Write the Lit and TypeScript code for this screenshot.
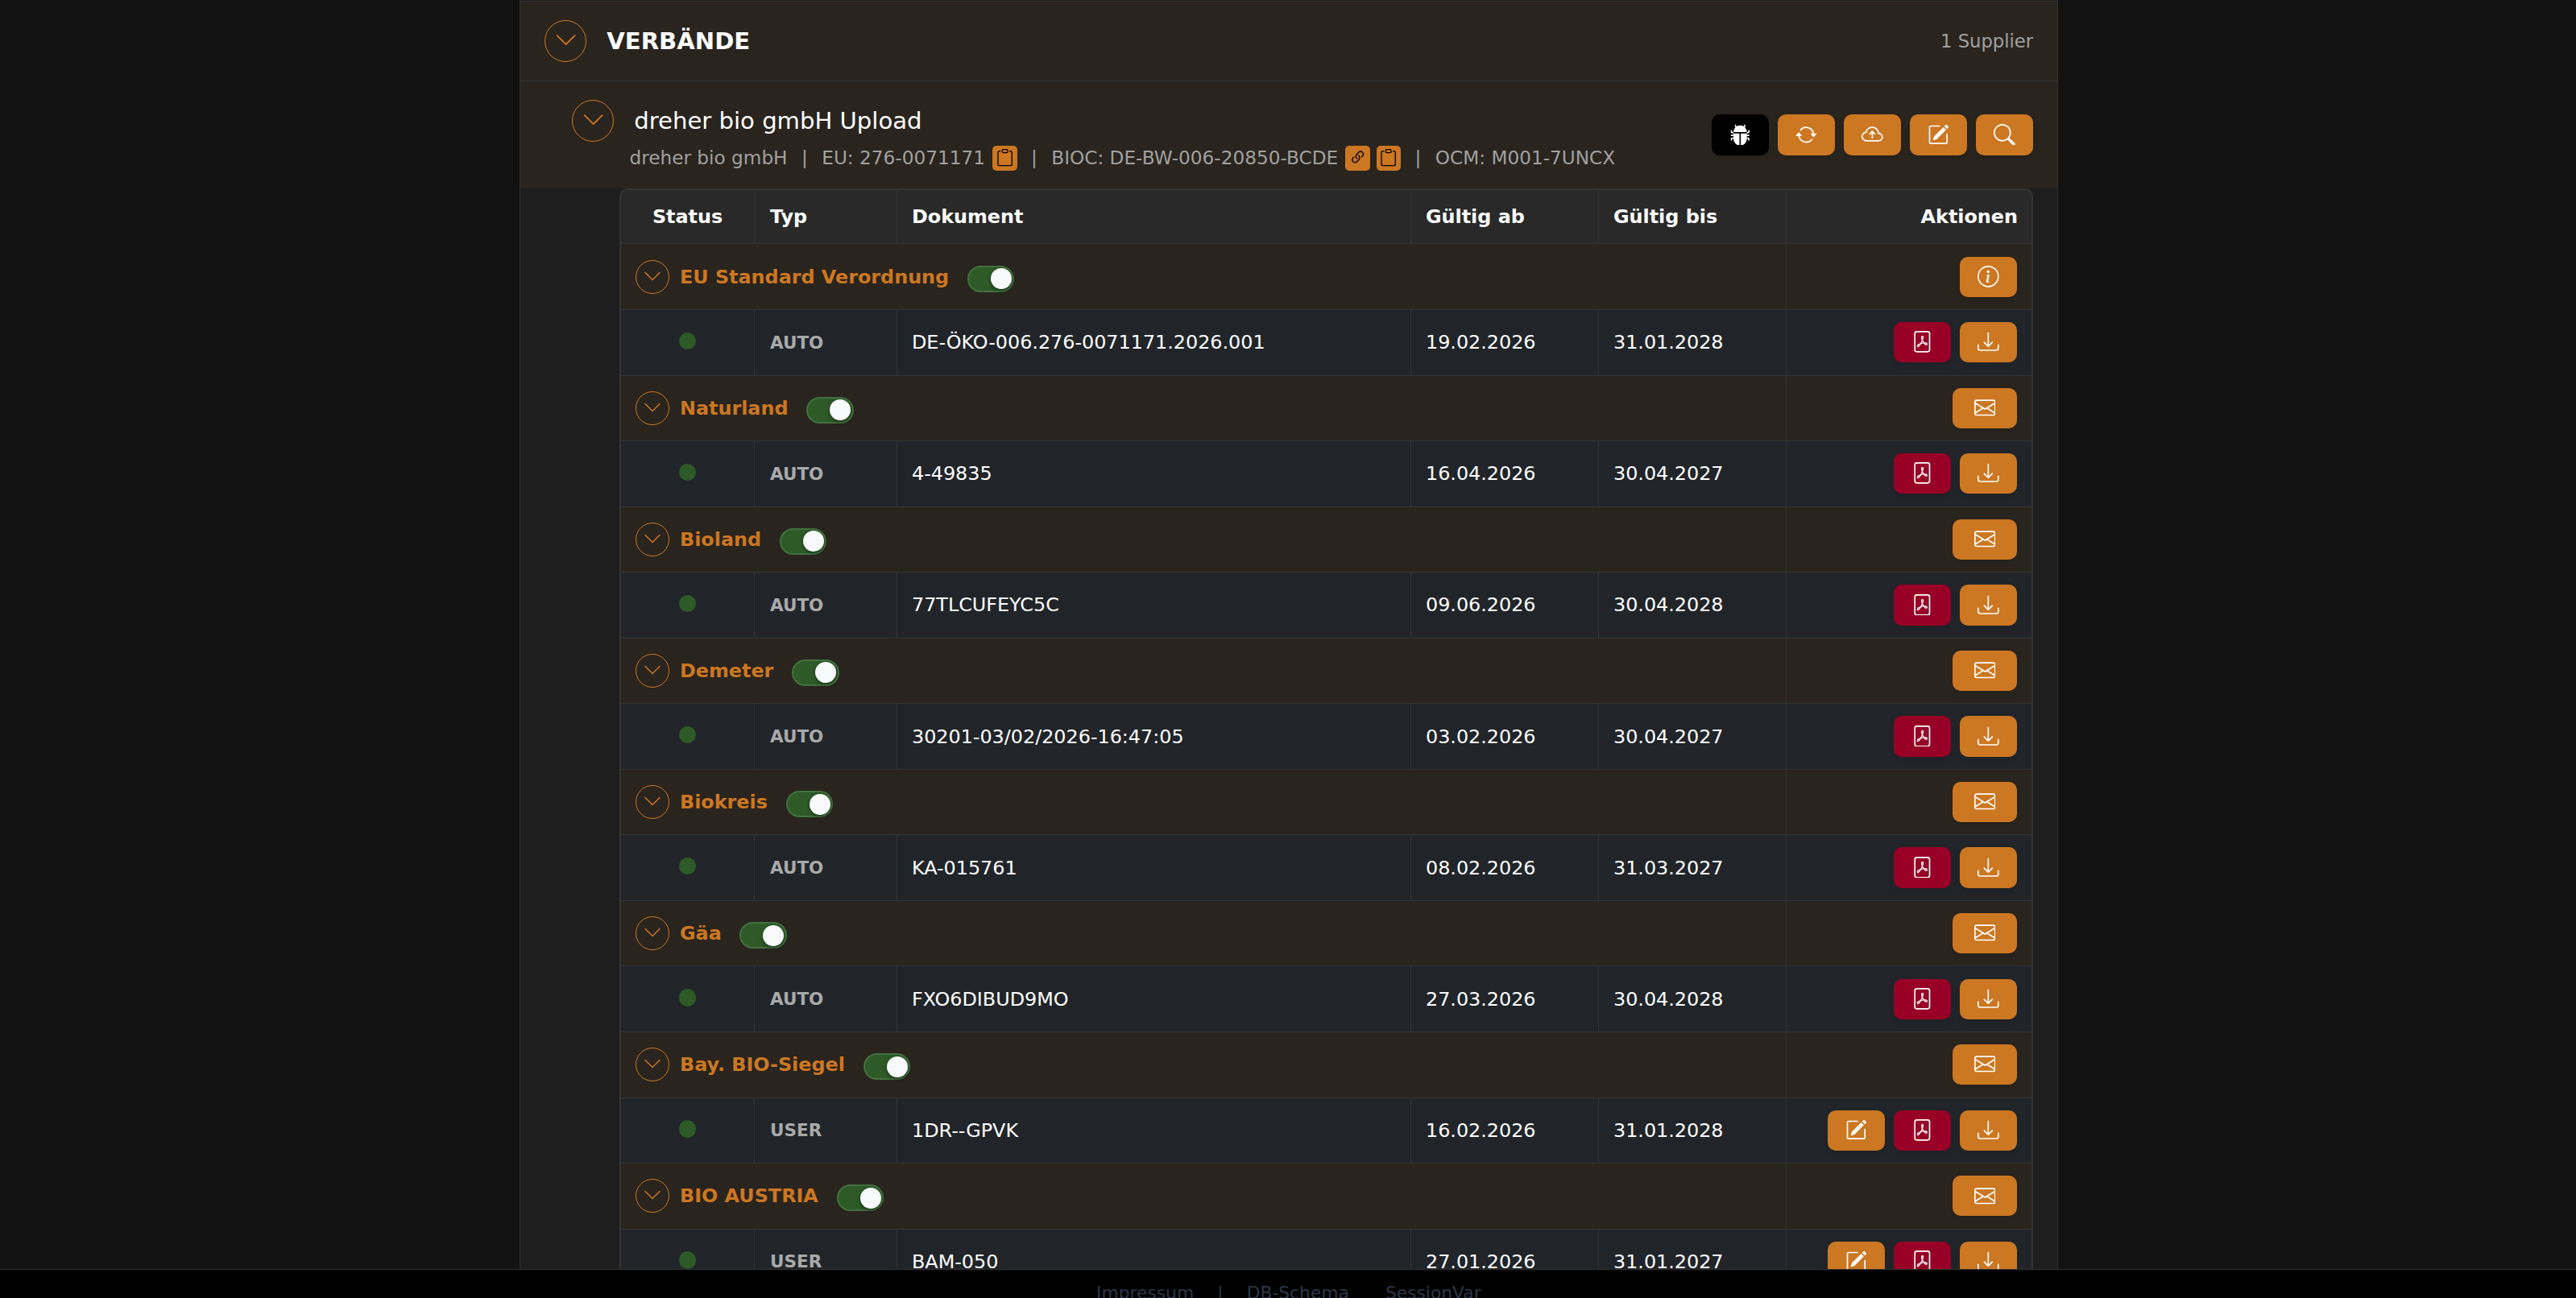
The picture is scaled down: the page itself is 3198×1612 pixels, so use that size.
import { LitElement, html, css, svg } from 'lit';
import type { SVGTemplateResult } from 'lit';
import { customElement, property } from 'lit/decorators.js';
import { classMap } from 'lit/directives/class-map.js';

const ICONS: Record<string, SVGTemplateResult> = {
  chevron: svg`<path fill-rule="evenodd" d="M1.646 4.646a.5.5 0 0 1 .708 0L8 10.293l5.646-5.647a.5.5 0 0 1 .708.708l-6 6a.5.5 0 0 1-.708 0l-6-6a.5.5 0 0 1 0-.708z"/>`,
  bug: svg`<path d="M4.978.855a.5.5 0 1 0-.956.29l.41 1.352A4.985 4.985 0 0 0 3 6h10a4.985 4.985 0 0 0-1.432-3.503l.41-1.352a.5.5 0 1 0-.956-.29l-.291.956A4.978 4.978 0 0 0 8 1a4.979 4.979 0 0 0-2.731.811l-.29-.956z"/><path d="M13 6v1H8.5v8.975A5 5 0 0 0 13 11h.5a.5.5 0 0 1 .5.5v.5a.5.5 0 1 0 1 0v-.5a1.5 1.5 0 0 0-1.5-1.5H13V9h1.5a.5.5 0 0 0 0-1H13V7h.5A1.5 1.5 0 0 0 15 5.5V5a.5.5 0 0 0-1 0v.5a.5.5 0 0 1-.5.5H13zm-5.5 9.975V7H3V6h-.5a.5.5 0 0 1-.5-.5V5a.5.5 0 0 0-1 0v.5A1.5 1.5 0 0 0 2.5 7H3v1H1.5a.5.5 0 0 0 0 1H3v1h-.5A1.5 1.5 0 0 0 1 11.5v.5a.5.5 0 1 0 1 0v-.5a.5.5 0 0 1 .5-.5H3a5 5 0 0 0 4.5 4.975z"/>`,
  repeat: svg`<path d="M11.534 7h3.932a.25.25 0 0 1 .192.41l-1.966 2.36a.25.25 0 0 1-.384 0l-1.966-2.36a.25.25 0 0 1 .192-.41zm-11 2h3.932a.25.25 0 0 0 .192-.41L2.692 6.23a.25.25 0 0 0-.384 0L.342 8.59A.25.25 0 0 0 .534 9z"/><path fill-rule="evenodd" d="M8 3c-1.552 0-2.94.707-3.857 1.818a.5.5 0 1 1-.771-.636A6.002 6.002 0 0 1 13.917 7H12.9A5.002 5.002 0 0 0 8 3zM3.1 9a5.002 5.002 0 0 0 8.757 2.182.5.5 0 1 1 .771.636A6.002 6.002 0 0 1 2.083 9H3.1z"/>`,
  cloud: svg`<path fill-rule="evenodd" d="M7.646 5.146a.5.5 0 0 1 .708 0l2 2a.5.5 0 0 1-.708.708L8.5 6.707V10.5a.5.5 0 0 1-1 0V6.707L6.354 7.854a.5.5 0 1 1-.708-.708l2-2z"/><path d="M4.406 3.342A5.53 5.53 0 0 1 8 2c2.69 0 4.923 2 5.166 4.579C14.758 6.804 16 8.137 16 9.773 16 11.569 14.502 13 12.687 13H3.781C1.708 13 0 11.366 0 9.318c0-1.763 1.266-3.223 2.942-3.593.143-.863.698-1.723 1.464-2.383zm.653.757c-.757.653-1.153 1.44-1.153 2.056v.448l-.445.049C2.064 6.805 1 7.952 1 9.318 1 10.785 2.23 12 3.781 12h8.906C13.98 12 15 10.988 15 9.773c0-1.216-1.02-2.228-2.313-2.228h-.5v-.5C12.188 4.825 10.328 3 8 3a4.53 4.53 0 0 0-2.941 1.1z"/>`,
  edit: svg`<path d="M15.502 1.94a.5.5 0 0 1 0 .706L14.459 3.69l-2-2L13.502.646a.5.5 0 0 1 .707 0l1.293 1.293zm-1.75 2.456-2-2L4.939 9.21a.5.5 0 0 0-.121.196l-.805 2.414a.25.25 0 0 0 .316.316l2.414-.805a.5.5 0 0 0 .196-.12l6.813-6.814z"/><path fill-rule="evenodd" d="M1 13.5A1.5 1.5 0 0 0 2.5 15h11a1.5 1.5 0 0 0 1.5-1.5v-6a.5.5 0 0 0-1 0v6a.5.5 0 0 1-.5.5h-11a.5.5 0 0 1-.5-.5v-11a.5.5 0 0 1 .5-.5H9a.5.5 0 0 0 0-1H2.5A1.5 1.5 0 0 0 1 2.5v11z"/>`,
  search: svg`<path d="M11.742 10.344a6.5 6.5 0 1 0-1.397 1.398h-.001c.03.04.062.078.098.115l3.85 3.85a1 1 0 0 0 1.415-1.414l-3.85-3.85a1.007 1.007 0 0 0-.115-.1zM12 6.5a5.5 5.5 0 1 1-11 0 5.5 5.5 0 0 1 11 0z"/>`,
  info: svg`<path d="M8 15A7 7 0 1 1 8 1a7 7 0 0 1 0 14zm0 1A8 8 0 1 0 8 0a8 8 0 0 0 0 16z"/><path d="m8.93 6.588-2.29.287-.082.38.45.083c.294.07.352.176.288.469l-.738 3.468c-.194.897.105 1.319.808 1.319.545 0 1.178-.252 1.465-.598l.088-.416c-.2.176-.492.246-.686.246-.275 0-.375-.193-.304-.533L8.93 6.588zM9 4.5a1 1 0 1 1-2 0 1 1 0 0 1 2 0z"/>`,
  pdf: svg`<path d="M4 0a2 2 0 0 0-2 2v12a2 2 0 0 0 2 2h8a2 2 0 0 0 2-2V2a2 2 0 0 0-2-2H4zm0 1h8a1 1 0 0 1 1 1v12a1 1 0 0 1-1 1H4a1 1 0 0 1-1-1V2a1 1 0 0 1 1-1z"/><path d="M4.603 12.087a.81.81 0 0 1-.438-.42c-.195-.388-.13-.776.08-1.102.198-.307.526-.568.897-.787a7.68 7.68 0 0 1 1.482-.645 19.701 19.701 0 0 0 1.062-2.227 7.269 7.269 0 0 1-.43-1.295c-.086-.4-.119-.796-.046-1.136.075-.354.274-.672.65-.823.192-.077.4-.12.602-.077a.7.7 0 0 1 .477.365c.088.164.12.356.127.538.007.187-.012.395-.047.614-.084.51-.27 1.134-.52 1.794a10.954 10.954 0 0 0 .98 1.686 5.753 5.753 0 0 1 1.334.05c.364.065.734.195.96.465.12.144.193.32.2.518.007.192-.047.382-.138.563a1.04 1.04 0 0 1-.354.416.856.856 0 0 1-.51.138c-.331-.014-.654-.196-.933-.417a5.716 5.716 0 0 1-.911-.95 11.642 11.642 0 0 0-1.997.406 11.311 11.311 0 0 1-1.021 1.51c-.29.35-.608.655-.926.787a.793.793 0 0 1-.58.029zm1.379-1.901c-.166.076-.32.156-.459.238-.328.194-.541.383-.647.547-.094.145-.096.25-.04.361.01.022.02.036.026.044a.27.27 0 0 0 .035-.012c.137-.056.355-.235.635-.572a8.18 8.18 0 0 0 .45-.606zm1.64-1.33a12.647 12.647 0 0 1 1.01-.193 11.666 11.666 0 0 1-.51-.858 20.741 20.741 0 0 1-.5 1.05zm2.446.45c.15.162.295.3.435.41.24.19.407.253.498.256a.107.107 0 0 0 .07-.015.307.307 0 0 0 .094-.125.436.436 0 0 0 .059-.2.095.095 0 0 0-.026-.063c-.052-.062-.2-.152-.518-.209a3.881 3.881 0 0 0-.612-.053zM8.078 5.8a6.7 6.7 0 0 0 .2-.828c.031-.188.043-.343.038-.465a.613.613 0 0 0-.032-.198.517.517 0 0 0-.145.04c-.087.035-.158.106-.196.283-.04.192-.03.469.046.822.024.111.054.227.089.346z"/>`,
  download: svg`<path d="M.5 9.9a.5.5 0 0 1 .5.5v2.5a1 1 0 0 0 1 1h12a1 1 0 0 0 1-1v-2.5a.5.5 0 0 1 1 0v2.5a2 2 0 0 1-2 2H2a2 2 0 0 1-2-2v-2.5a.5.5 0 0 1 .5-.5z"/><path d="M7.646 11.854a.5.5 0 0 0 .708 0l3-3a.5.5 0 0 0-.708-.708L8.5 10.293V1.5a.5.5 0 0 0-1 0v8.793L5.354 8.146a.5.5 0 1 0-.708.708l3 3z"/>`,
  mail: svg`<path d="M0 4a2 2 0 0 1 2-2h12a2 2 0 0 1 2 2v8a2 2 0 0 1-2 2H2a2 2 0 0 1-2-2V4zm2-1a1 1 0 0 0-1 1v.217l7 4.2 7-4.2V4a1 1 0 0 0-1-1H2zm13 2.383-4.708 2.825L15 11.105V5.383zm-.034 6.876-5.64-3.471L8 9.583l-1.326-.795-5.64 3.47A1 1 0 0 0 2 13h12a1 1 0 0 0 .966-.741zM1 11.105l4.708-2.897L1 5.383v5.722z"/>`,
  clipboard: svg`<path d="M4 1.5H3a2 2 0 0 0-2 2V14a2 2 0 0 0 2 2h10a2 2 0 0 0 2-2V3.5a2 2 0 0 0-2-2h-1v1h1a1 1 0 0 1 1 1V14a1 1 0 0 1-1 1H3a1 1 0 0 1-1-1V3.5a1 1 0 0 1 1-1h1v-1z"/><path d="M9.5 1a.5.5 0 0 1 .5.5v1a.5.5 0 0 1-.5.5h-3a.5.5 0 0 1-.5-.5v-1a.5.5 0 0 1 .5-.5h3zm-3-1A1.5 1.5 0 0 0 5 1.5v1A1.5 1.5 0 0 0 6.5 4h3A1.5 1.5 0 0 0 11 2.5v-1A1.5 1.5 0 0 0 9.5 0h-3z"/>`,
  link: svg`<path d="M4.715 6.542 3.343 7.914a3 3 0 1 0 4.243 4.243l1.828-1.829A3 3 0 0 0 8.586 5.5L8 6.086a1.002 1.002 0 0 0-.154.199 2 2 0 0 1 .861 3.337L6.88 11.45a2 2 0 1 1-2.83-2.83l.793-.792a4.018 4.018 0 0 1-.128-1.287z"/><path d="M6.586 4.672A3 3 0 0 0 7.414 9.5l.775-.776a2 2 0 0 1-.896-3.346L9.12 3.55a2 2 0 1 1 2.83 2.83l-.793.792c.112.42.155.855.128 1.287l1.372-1.372a3 3 0 1 0-4.243-4.243L6.586 4.672z"/>`,
};

interface Cert {
  name: string;
  type: string;
  doc: string;
  from: string;
  to: string;
}

const CERTS: Cert[] = [
  { name: 'EU Standard Verordnung', type: 'AUTO', doc: 'DE-ÖKO-006.276-0071171.2026.001', from: '19.02.2026', to: '31.01.2028' },
  { name: 'Naturland', type: 'AUTO', doc: '4-49835', from: '16.04.2026', to: '30.04.2027' },
  { name: 'Bioland', type: 'AUTO', doc: '77TLCUFEYC5C', from: '09.06.2026', to: '30.04.2028' },
  { name: 'Demeter', type: 'AUTO', doc: '30201-03/02/2026-16:47:05', from: '03.02.2026', to: '30.04.2027' },
  { name: 'Biokreis', type: 'AUTO', doc: 'KA-015761', from: '08.02.2026', to: '31.03.2027' },
  { name: 'Gäa', type: 'AUTO', doc: 'FXO6DIBUD9MO', from: '27.03.2026', to: '30.04.2028' },
  { name: 'Bay. BIO-Siegel', type: 'USER', doc: '1DR--GPVK', from: '16.02.2026', to: '31.01.2028' },
  { name: 'BIO AUSTRIA', type: 'USER', doc: 'BAM-050', from: '27.01.2026', to: '31.01.2027' },
];

@customElement('bc-icon')
class BcIcon extends LitElement {
  static styles = css`
    :host {
      display: block;
      width: 26.67px;
      height: 26.67px;
    }

    svg {
      display: block;
      width: 100%;
      height: 100%;
      fill: currentColor;
    }
  `;

  @property()
  name: string = '';

  protected render() {
    return html`<svg viewBox="0 0 16 16">${ICONS[this.name]}</svg>`;
  }
}

@customElement('bc-button')
class BcButton extends LitElement {
  static styles = css`
    :host {
      display: block;
    }

    .btn {
      display: flex;
      align-items: center;
      justify-content: center;
      box-sizing: border-box;
      width: 71px;
      height: 50.3px;
      padding: 0 0 1px;
      border: none;
      border-radius: 10px;
      background: #cc7722;
      color: #fff;
      box-shadow: 0 3px 7px rgba(0, 0, 0, 0.1);
    }

    .dark {
      background: #000;
    }

    .pdf {
      background: #990026;
    }

    .mail {
      width: 80px;
    }
  `;

  @property()
  icon: string = '';

  protected render() {
    const classes = {
      btn: true,
      dark: this.icon === 'bug',
      pdf: this.icon === 'pdf',
      mail: this.icon === 'mail',
    };
    return html`<button class=${classMap(classes)}><bc-icon name=${this.icon}></bc-icon></button>`;
  }
}

@customElement('app-root')
class AppRoot extends LitElement {
  static styles = css`
    :host {
      display: flex;
      flex-direction: column;
      height: 100vh;
      overflow: hidden;
      background: #121212;
      color: #fff;
      font: 23.85px/34px 'DejaVu Sans', sans-serif;
      white-space: nowrap;
    }

    .content {
      flex: 1;
      min-height: 0;
      overflow: hidden;
    }

    .panel {
      box-sizing: border-box;
      width: 1910px;
      min-height: 100%;
      margin-left: 645px;
      padding-top: 1px;
      border: 1px solid #333;
      border-width: 0 1px;
      background: #1e1e1e;
    }

    .group-head,
    .supplier {
      display: flex;
      align-items: center;
      box-sizing: border-box;
      border-top: 1px solid #333;
      background: #29241e;
    }

    .group-head {
      height: 99px;
      padding: 0 30px;
    }

    .supplier {
      height: 134px;
      padding: 0 30px 0 64px;
    }

    .toggle {
      display: flex;
      align-items: center;
      justify-content: center;
      flex: none;
      box-sizing: border-box;
      width: 52.3px;
      height: 52.3px;
      padding: 0 0 2px;
      border: 1px solid #cc7722;
      border-radius: 50%;
      background: none;
      color: #cc7722;
    }

    .toggle bc-icon {
      width: 29.3px;
      height: 29.3px;
    }

    .toggle.small {
      width: 42px;
      height: 42px;
    }

    .toggle.small bc-icon {
      width: 24px;
      height: 24px;
    }

    .group-title {
      margin: 0 auto 0 25px;
      font-size: 29.1px;
      font-weight: bold;
    }

    .count {
      color: #a0a0a0;
      font-size: 22.67px;
    }

    .supplier-info {
      flex: 1;
      padding-top: 5px;
    }

    .supplier-name {
      display: flex;
      align-items: center;
      gap: 25px;
      height: 52px;
      font-size: 29.1px;
    }

    .meta {
      display: flex;
      align-items: center;
      height: 40.6px;
      padding-left: 71.5px;
      color: #a0a0a0;
      font-size: 23.2px;
    }

    .sep {
      width: 42.7px;
      text-align: center;
    }

    .badge {
      display: flex;
      align-items: center;
      justify-content: center;
      width: 30.6px;
      height: 31px;
      margin-left: 9px;
      border-radius: 5px;
      background: #cc7722;
      color: #000;
    }

    .badge + .badge {
      margin-left: 7.7px;
    }

    .badge bc-icon {
      width: 21.3px;
      height: 21.3px;
    }

    .actions {
      display: flex;
      gap: 11px;
      justify-content: flex-end;
    }

    .table {
      width: 1751px;
      margin-left: 123px;
      border: 2px solid #333;
      border-radius: 10px 10px 0 0;
      background: #292929;
    }

    .row {
      display: grid;
      grid-template-columns: 165px 177px 638px 233px 233px 305px;
      box-sizing: border-box;
      height: 81.55px;
      border-top: 1px solid #333;
      background: #212529;
    }

    .row > * {
      display: flex;
      align-items: center;
      box-sizing: border-box;
      padding: 0 18px;
      border-left: 1px solid #333;
    }

    .row > *:first-child {
      border-left: none;
    }

    .row > *:last-child {
      justify-content: flex-end;
    }

    .row > .type {
      padding-left: 19px;
    }

    .row.head {
      height: 66.42px;
      border-top: none;
      background: none;
      font-weight: bold;
    }

    .row.head > *:last-child {
      padding-right: 17px;
    }

    .row.group {
      background: #29241e;
    }

    .row .status {
      justify-content: center;
    }

    .row.group .name {
      grid-column: span 5;
      color: #cc7722;
      font-weight: bold;
    }

    .name .toggle {
      margin-right: 13px;
    }

    .dot {
      width: 21.3px;
      height: 21.3px;
      margin-bottom: 3.6px;
      border-radius: 50%;
      background: #2d5a27;
    }

    .type-label {
      padding-top: 1px;
      color: #a9a9a9;
      font-size: 21.5px;
      font-weight: bold;
    }

    .switch {
      display: flex;
      justify-content: flex-end;
      align-items: center;
      box-sizing: border-box;
      width: 58.6px;
      height: 33px;
      margin: 5px 0 0 22.7px;
      padding-right: 1.6px;
      border: 2px solid #437040;
      border-radius: 17px;
      background: #2d5a27;
    }

    .knob {
      width: 26px;
      height: 26px;
      border-radius: 50%;
      background: #f8f9fa;
      box-shadow: 0 2px 5px rgba(0, 0, 0, 0.4);
    }

    .footer {
      display: flex;
      flex: none;
      box-sizing: border-box;
      height: 36px;
      padding: 12px 0 0 1361px;
      border-top: 1px solid #333;
      background: #000;
      color: #2d3748;
      font-size: 21.8px;
    }

    .footer .sep {
      width: 65.5px;
    }

    .footer .last {
      margin-left: 45px;
    }
  `;

  protected render() {
    return html`
      <div class="content">
        <main class="panel">
          <header class="group-head">
            <button class="toggle"><bc-icon name="chevron"></bc-icon></button>
            <div class="group-title">VERBÄNDE</div>
            <div class="count">1 Supplier</div>
          </header>
          <section class="supplier">
            <div class="supplier-info">
              <div class="supplier-name">
                <button class="toggle"><bc-icon name="chevron"></bc-icon></button>
                <span>dreher bio gmbH Upload</span>
              </div>
              <div class="meta">
                <span>dreher bio gmbH</span>
                <span class="sep">|</span>
                <span>EU: 276-0071171</span>
                <span class="badge"><bc-icon name="clipboard"></bc-icon></span>
                <span class="sep">|</span>
                <span>BIOC: DE-BW-006-20850-BCDE</span>
                <span class="badge"><bc-icon name="link"></bc-icon></span>
                <span class="badge"><bc-icon name="clipboard"></bc-icon></span>
                <span class="sep">|</span>
                <span>OCM: M001-7UNCX</span>
              </div>
            </div>
            <div class="actions">
              ${['bug', 'repeat', 'cloud', 'edit', 'search'].map((icon) => html`<bc-button icon=${icon}></bc-button>`)}
            </div>
          </section>
          <div class="table">
            <div class="row head">
              <div class="status">Status</div>
              <div class="type">Typ</div>
              <div>Dokument</div>
              <div>Gültig ab</div>
              <div>Gültig bis</div>
              <div>Aktionen</div>
            </div>
            ${CERTS.map((cert, i) => this._renderCert(cert, i))}
          </div>
        </main>
      </div>
      <footer class="footer">
        <span>Impressum</span>
        <span class="sep">|</span>
        <span>DB-Schema</span>
        <span class="last">SessionVar</span>
      </footer>
    `;
  }

  private _renderCert(cert: Cert, index: number) {
    return html`
      <div class="row group">
        <div class="name">
          <button class="toggle small"><bc-icon name="chevron"></bc-icon></button>
          <span>${cert.name}</span>
          <span class="switch"><span class="knob"></span></span>
        </div>
        <div class="actions"><bc-button icon=${index === 0 ? 'info' : 'mail'}></bc-button></div>
      </div>
      <div class="row">
        <div class="status"><span class="dot"></span></div>
        <div class="type"><span class="type-label">${cert.type}</span></div>
        <div>${cert.doc}</div>
        <div>${cert.from}</div>
        <div>${cert.to}</div>
        <div class="actions">
          ${cert.type === 'USER' ? html`<bc-button icon="edit"></bc-button>` : ''}
          <bc-button icon="pdf"></bc-button>
          <bc-button icon="download"></bc-button>
        </div>
      </div>
    `;
  }
}
